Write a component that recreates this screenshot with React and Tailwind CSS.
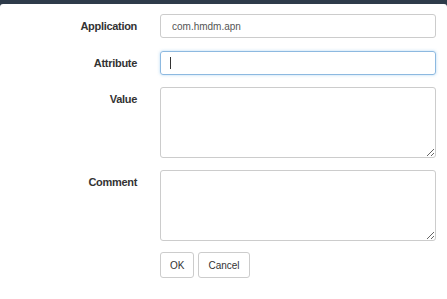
import React from "react";

const font = { fontFamily: '"Liberation Sans", Arial, sans-serif' };

function Label({ children }) {
  return (
    <div className="pt-[5px] text-right text-[11px] tracking-[-0.3px] leading-[15px] font-bold text-[#333333]">
      {children}
    </div>
  );
}

export default function App() {
  return (
    <div className="w-[447px] h-[299px] bg-[#2e3b4a] pt-[4px] overflow-hidden" style={font}>
      <div className="h-full bg-white rounded-t-[3px] pt-[10px] pr-[11px]">
        <div className="grid grid-cols-[137px_1fr] gap-x-[23px]">
          <Label>Application</Label>
          <div className="h-[24px] border border-[#cccccc] rounded-[3px] pl-[11px] flex items-center text-[10px] text-[#555555]">
            com.hmdm.apn
          </div>

          <div className="col-span-2 h-[13px]" />

          <Label>Attribute</Label>
          <div className="h-[24px] border border-[#8db9e0] rounded-[3px] pl-[9px] flex items-center shadow-[0_0_3px_rgba(102,175,233,0.5)]">
            <span className="w-px h-[12px] bg-[#333333]" />
          </div>

          <div className="col-span-2 h-[12px]" />

          <Label>Value</Label>
          <textarea className="block h-[71px] w-full border border-[#cccccc] rounded-[3px] resize-y outline-none" />

          <div className="col-span-2 h-[12px]" />

          <Label>Comment</Label>
          <textarea className="block h-[71px] w-full border border-[#cccccc] rounded-[3px] resize-y outline-none" />

          <div className="col-span-2 h-[11px]" />

          <div />
          <div className="flex gap-[4px]">
            <button className="h-[26px] px-[9px] border border-[#cccccc] rounded-[3px] bg-white text-[10px] text-[#333333]">
              OK
            </button>
            <button className="h-[26px] px-[9px] border border-[#cccccc] rounded-[3px] bg-white text-[10px] text-[#333333]">
              Cancel
            </button>
          </div>
        </div>
      </div>
    </div>
  );
}
